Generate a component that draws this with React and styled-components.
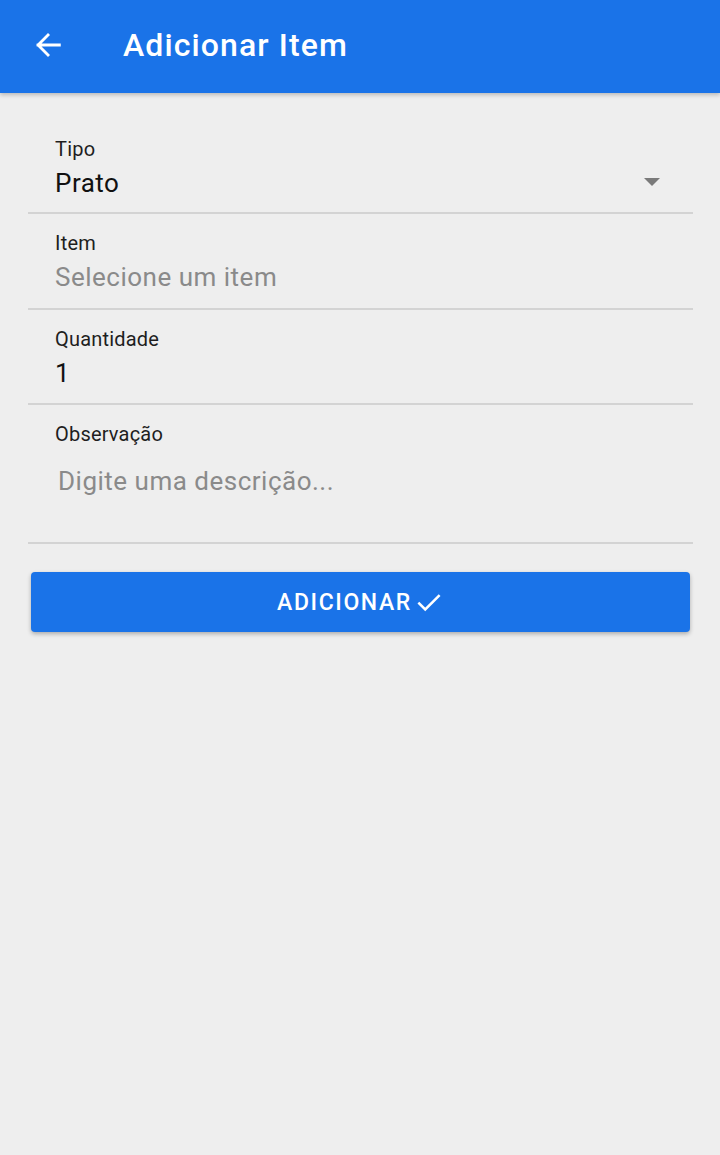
import React from "react";
import styled, { createGlobalStyle } from "styled-components";

const GlobalStyle = createGlobalStyle`
  html, body { margin: 0; padding: 0; background: #eeeeee; }
  body { font-family: Roboto, "Noto Sans", "Liberation Sans", sans-serif; }
  * { box-sizing: border-box; }
`;

const Page = styled.div`
  min-height: 1155px;
  background: #eeeeee;
  display: flex;
  flex-direction: column;
`;

const AppBar = styled.header`
  height: 93px;
  background: #1a73e8;
  display: flex;
  align-items: center;
  padding: 0 0 4px 31px;
  box-shadow: 0 2px 4px rgba(0, 0, 0, 0.22);
`;

const BackButton = styled.button`
  background: none;
  border: none;
  padding: 0;
  width: 34px;
  height: 34px;
  display: flex;
  align-items: center;
  justify-content: center;
  color: #fff;
  cursor: pointer;
`;

const Title = styled.h1`
  margin: 0 0 0 58px;
  font-size: 32px;
  font-weight: 500;
  color: #fff;
  letter-spacing: 1.1px;
`;

const Form = styled.main`
  padding: 27px 27px 0 28px;
  display: flex;
  flex-direction: column;
`;

const Field = styled.div`
  position: relative;
  display: flex;
  flex-direction: column;
  height: ${(p) => p.$h}px;
  padding: ${(p) => p.$pt}px 27px 0 27px;
  border-bottom: 2px solid #d3d3d3;
`;

const Label = styled.label`
  font-size: 20px;
  line-height: 22px;
  letter-spacing: 0.2px;
  color: #1e1e1e;
`;

const Value = styled.div`
  margin-top: ${(p) => p.$mt || 8}px;
  font-size: 26px;
  line-height: 30px;
  letter-spacing: 0.5px;
  color: ${(p) => (p.$placeholder ? "#8a8a8a" : "#111")};
  padding-left: ${(p) => p.$indent || 0}px;
`;

const Caret = styled.span`
  position: absolute;
  right: 33px;
  top: 58px;
  width: 0;
  height: 0;
  border-left: 8.5px solid transparent;
  border-right: 8.5px solid transparent;
  border-top: 8px solid #7a7a7a;
`;

const SubmitButton = styled.button`
  margin: 28px 3px 0 3px;
  height: 60px;
  border: none;
  border-radius: 4px;
  background: #1a73e8;
  box-shadow: 0 2px 4px rgba(0, 0, 0, 0.28);
  color: #fff;
  font-family: inherit;
  font-size: 23px;
  font-weight: 500;
  letter-spacing: 1.6px;
  display: flex;
  align-items: center;
  justify-content: center;
  gap: 2px;
  cursor: pointer;
`;

export default function App() {
  return (
    <Page>
      <GlobalStyle />
      <AppBar>
        <BackButton aria-label="Voltar">
          <svg width="34" height="34" viewBox="0 0 24 24" fill="none">
            <path d="M20 12H5M12 5l-7 7 7 7" stroke="#fff" strokeWidth="2" strokeLinecap="square" />
          </svg>
        </BackButton>
        <Title>Adicionar Item</Title>
      </AppBar>
      <Form>
        <Field $h={94} $pt={18}>
          <Label>Tipo</Label>
          <Value>Prato</Value>
          <Caret />
        </Field>
        <Field $h={96} $pt={18}>
          <Label>Item</Label>
          <Value $placeholder>Selecione um item</Value>
        </Field>
        <Field $h={95} $pt={18}>
          <Label>Quantidade</Label>
          <Value>1</Value>
        </Field>
        <Field $h={139} $pt={18}>
          <Label>Observação</Label>
          <Value $placeholder $indent={3} $mt={21}>Digite uma descrição...</Value>
        </Field>
        <SubmitButton>
          ADICIONAR
          <svg width="30" height="30" viewBox="0 0 24 24" fill="none">
            <path d="M3.5 12.5l5.5 5.5L20.5 6.5" stroke="#fff" strokeWidth="2" />
          </svg>
        </SubmitButton>
      </Form>
    </Page>
  );
}
